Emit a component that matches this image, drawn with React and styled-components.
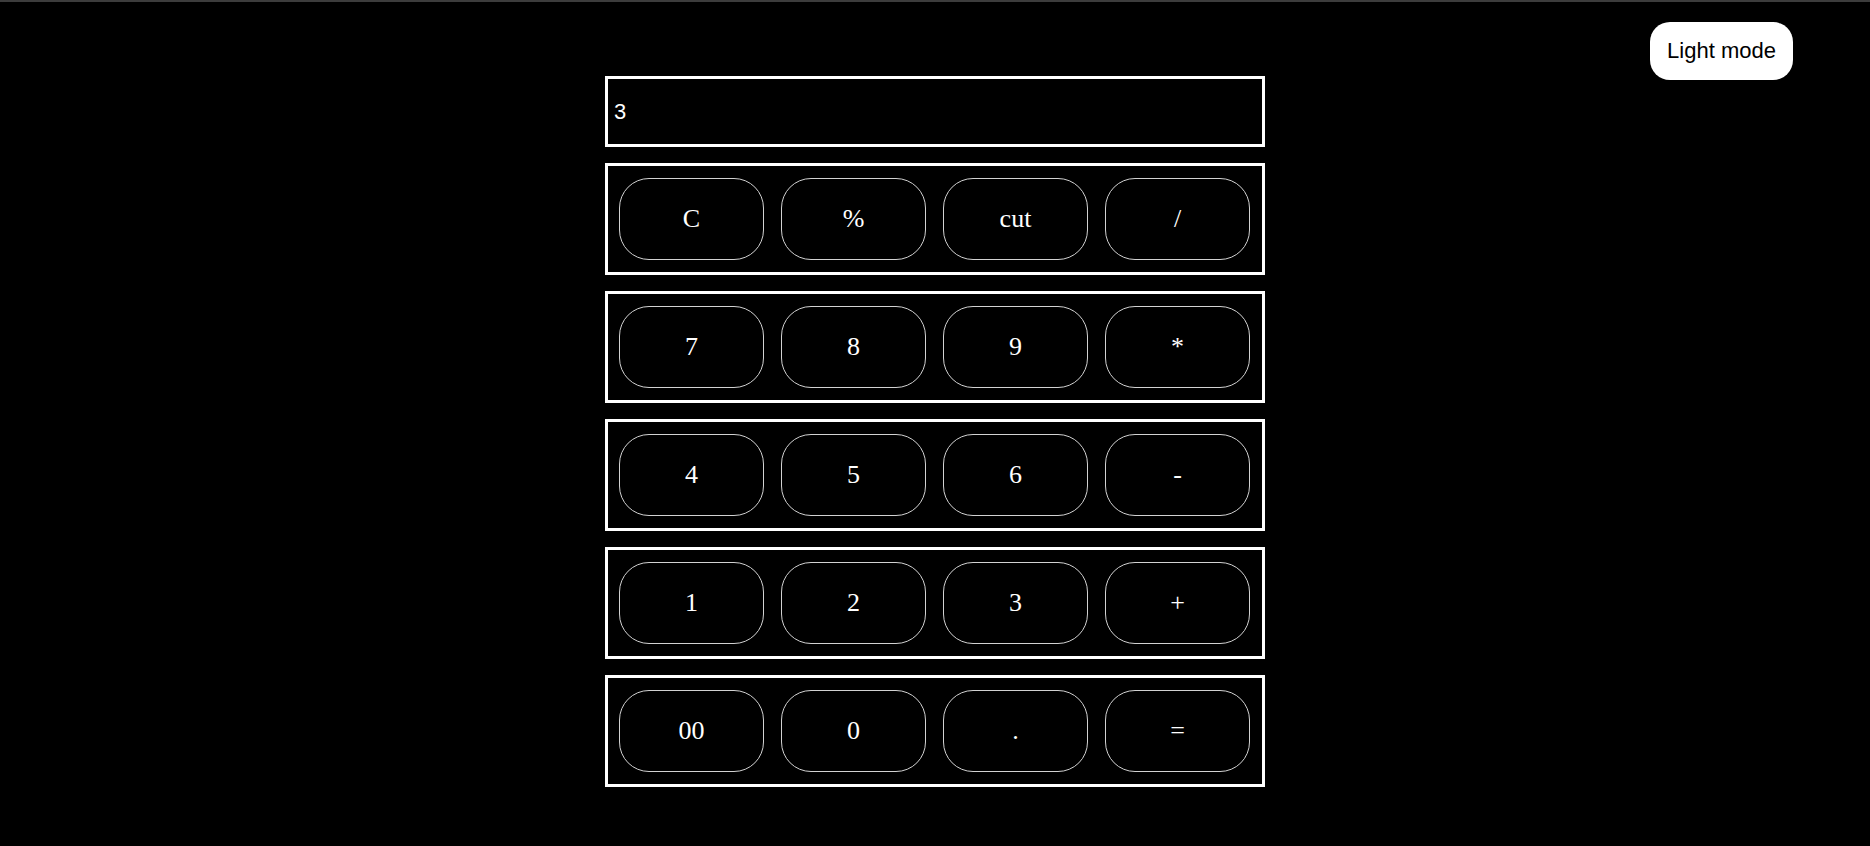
import React, { useState } from "react";
import styled, { createGlobalStyle } from "styled-components";

const GlobalStyle = createGlobalStyle`
  html, body {
    margin: 0;
    padding: 0;
    background: #000;
  }
  body {
    font-family: "Liberation Sans", Arial, sans-serif;
    min-height: 846px;
  }
`;

const TopBar = styled.div`
  height: 2px;
  background: #3c3c3c;
`;

const Page = styled.main`
  position: relative;
  padding-top: 74px;
  padding-bottom: 40px;
`;

const ModeToggle = styled.button`
  position: absolute;
  top: 20px;
  right: 77px;
  width: 143px;
  height: 58px;
  border: none;
  border-radius: 20px;
  background: #fff;
  color: #000;
  font-family: "Liberation Sans", Arial, sans-serif;
  font-size: 22px;
  cursor: pointer;
  padding: 0;
`;

const Calculator = styled.div`
  width: 660px;
  margin: 0 auto;
  display: flex;
  flex-direction: column;
  gap: 16px;
`;

const Display = styled.div`
  box-sizing: border-box;
  height: 71px;
  border: 3px solid #fff;
  display: flex;
  align-items: center;
  padding: 0 6px;
  color: #fff;
  font-family: "Liberation Sans", Arial, sans-serif;
  font-size: 22px;
`;

const KeyRow = styled.div`
  box-sizing: border-box;
  height: 112px;
  border: 3px solid #fff;
  padding: 0 12px 0 11px;
  display: flex;
  align-items: center;
  justify-content: space-between;
`;

const Key = styled.button`
  box-sizing: border-box;
  width: 145px;
  height: 82px;
  border: 1px solid #d2d2d2;
  border-radius: 30px;
  background: #000;
  color: #fff;
  font-family: "Liberation Serif", "Times New Roman", serif;
  font-size: 26px;
  padding: 0;
  cursor: pointer;
`;

const rows = [
  ["C", "%", "cut", "/"],
  ["7", "8", "9", "*"],
  ["4", "5", "6", "-"],
  ["1", "2", "3", "+"],
  ["00", "0", ".", "="],
];

export default function App() {
  const [value] = useState("3");
  const [dark, setDark] = useState(true);
  return (
    <>
      <GlobalStyle />
      <TopBar />
      <Page>
        <ModeToggle onClick={() => setDark(!dark)}>Light mode</ModeToggle>
        <Calculator>
          <Display>{value}</Display>
          {rows.map((row, i) => (
            <KeyRow key={i}>
              {row.map((k) => (
                <Key key={k}>{k}</Key>
              ))}
            </KeyRow>
          ))}
        </Calculator>
      </Page>
    </>
  );
}
